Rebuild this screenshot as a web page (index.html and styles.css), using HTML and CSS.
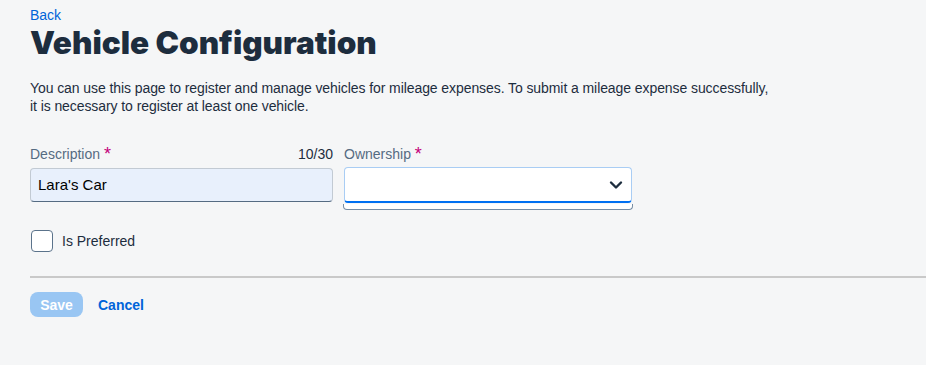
FILE: index.html
```html
<!DOCTYPE html>
<html lang="en">
<head>
    <meta charset="UTF-8">
    <meta name="viewport" content="width=device-width, initial-scale=1.0">
    <title>Vehicle Configuration</title>
    <link rel="stylesheet" href="styles.css">
</head>
<body>
    <div class="page">
        <a class="back-link" href="#">Back</a>
        <h1 class="title">Vehicle Configuration</h1>

        <p class="intro">
            You can use this page to register and manage vehicles for mileage expenses. To submit a mileage expense successfully,<br>
            it is necessary to register at least one vehicle.
        </p>

        <div class="form-row">
            <div class="field field-description">
                <div class="field-label">
                    <span>Description <span class="required">*</span></span>
                    <span class="counter">10/30</span>
                </div>
                <div class="input">Lara's Car</div>
            </div>
            <div class="field field-ownership">
                <div class="field-label">
                    <span>Ownership <span class="required">*</span></span>
                </div>
                <div class="select">
                    <svg class="chevron" width="14" height="10" viewBox="0 0 14 10">
                        <path d="M2 2.5 L7 7.5 L12 2.5" fill="none" stroke="#1d2d3e" stroke-width="2.4" stroke-linecap="round" stroke-linejoin="round"/>
                    </svg>
                </div>
                <div class="select-popover"></div>
            </div>
        </div>

        <label class="checkbox-row">
            <span class="checkbox"></span>
            <span>Is Preferred</span>
        </label>
    </div>

    <div class="divider"></div>

    <div class="actions">
        <button class="btn-save" disabled>Save</button>
        <a class="btn-cancel" href="#">Cancel</a>
    </div>
</body>
</html>
```

FILE: styles.css
```css
body {
    margin: 0;
    background: #f5f6f7;
    font-family: 'Liberation Sans', Arial, sans-serif;
    color: #1d2d3e;
    font-size: 14px;
}
.page {
    padding: 6px 0 0 30px;
}
.back-link {
    display: block;
    color: #0064d9;
    text-decoration: none;
    font-size: 14px;
    line-height: 18px;
}
.title {
    margin: 0;
    font-family: Inter, Lato, sans-serif;
    font-weight: 900;
    font-size: 31.5px;
    line-height: 38px;
    color: #1d2d3e;
}
.intro {
    margin: 17px 0 0 0;
    line-height: 18px;
    letter-spacing: -0.08px;
    color: #1d2d3e;
}
.form-row {
    display: flex;
    gap: 11px;
    margin-top: 30px;
}
.field-label {
    display: flex;
    justify-content: space-between;
    color: #556b82;
    font-size: 14px;
    line-height: 18px;
    height: 18px;
}
.required {
    color: #c4007a;
    font-size: 18px;
    line-height: 14px;
    vertical-align: -1px;
}
.counter {
    color: #1d2d3e;
}
.field-description {
    width: 303px;
}
.field-description .field-label {
    margin-bottom: 5px;
}
.input {
    box-sizing: border-box;
    height: 34px;
    background: #e8f0fc;
    border: 1px solid #c2cad3;
    border-bottom-color: #556b82;
    border-radius: 4px;
    padding: 0 7px;
    line-height: 32px;
    font-size: 15px;
    color: #000;
}
.field-ownership {
    width: 288px;
}
.field-ownership .field-label {
    margin-bottom: 4px;
}
.select {
    box-sizing: border-box;
    height: 36px;
    background: #fff;
    border: 1px solid #a9cdf4;
    border-bottom: 2px solid #0070f2;
    border-radius: 4px;
    display: flex;
    align-items: center;
    justify-content: flex-end;
    padding-right: 8px;
}
.select-popover {
    box-sizing: border-box;
    height: 6px;
    margin: 1px -1px 0;
    border: 1px solid #758ca4;
    border-top: none;
    border-radius: 0 0 4px 4px;
    background: #fff;
}
.checkbox-row {
    display: flex;
    align-items: center;
    gap: 9px;
    margin-top: 20px;
    font-size: 14px;
}
.checkbox {
    box-sizing: border-box;
    width: 22px;
    height: 22px;
    border: 1px solid #5b738b;
    border-radius: 4px;
    background: #fff;
    margin-left: 1px;
}
.divider {
    margin: 24px 0 0 30px;
    height: 2px;
    background: #c9c9c9;
}
.actions {
    display: flex;
    align-items: center;
    gap: 15px;
    padding: 14px 0 0 30px;
}
.btn-save {
    width: 53px;
    height: 25px;
    border: none;
    border-radius: 8px;
    background: #99c6f3;
    color: #fff;
    font-family: 'Liberation Sans', Arial, sans-serif;
    font-weight: bold;
    font-size: 14px;
    padding: 0;
}
.btn-cancel {
    color: #0064d9;
    font-weight: bold;
    text-decoration: none;
    font-size: 14px;
}
```
